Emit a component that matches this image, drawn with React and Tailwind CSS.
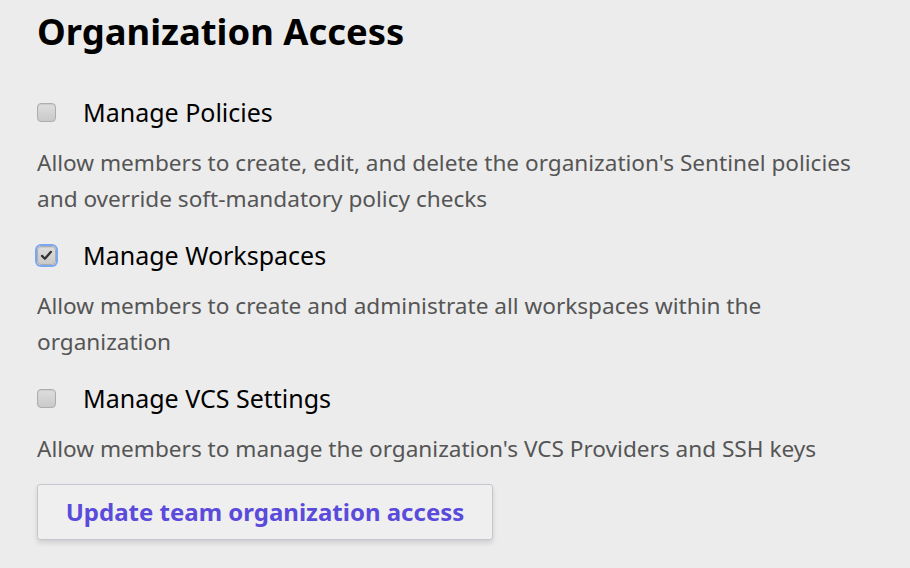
import React from "react";

const perms = [
  {
    label: "Manage Policies",
    desc: "Allow members to create, edit, and delete the organization's Sentinel policies and override soft-mandatory policy checks",
    checked: false,
  },
  {
    label: "Manage Workspaces",
    desc: "Allow members to create and administrate all workspaces within the organization",
    checked: true,
  },
  {
    label: "Manage VCS Settings",
    desc: "Allow members to manage the organization's VCS Providers and SSH keys",
    checked: false,
  },
];

function Box({ checked }) {
  return (
    <span
      className={`relative flex h-[19px] w-[19px] shrink-0 items-center justify-center rounded-[4px] ${
        checked ? "ring-2 ring-[#7aa7f0]" : ""
      }`}
    >
      <span className="absolute inset-0 rounded-[4px] border border-[#adadad] bg-gradient-to-b from-[#dedede] to-[#c9c9c9] shadow-[inset_0_1px_1px_rgba(0,0,0,0.08)]" />
      {checked && (
        <svg viewBox="0 0 16 16" className="relative h-[13px] w-[13px]">
          <path d="M2.5 8.5 L6 12 L13.5 3.5" fill="none" stroke="#333" strokeWidth="2.8" strokeLinecap="round" strokeLinejoin="round" />
        </svg>
      )}
    </span>
  );
}

export default function App() {
  return (
    <div className="min-h-screen bg-[#ececec] px-[37px] pt-[8px] text-[#111]" style={{ fontFamily: "'Noto Sans', 'Open Sans', sans-serif" }}>
      <h1 className="text-[36.4px] font-bold leading-[46px] text-black">Organization Access</h1>

      <div className="mt-[40px] flex flex-col">
        {perms.map((p) => (
          <div key={p.label} className="mb-[20px] last:mb-0">
            <label className="flex h-[36px] items-center gap-[27px]">
              <Box checked={p.checked} />
              <span className="text-[25px] leading-none text-black">{p.label}</span>
            </label>
            <p className="mt-[15px] max-w-[840px] text-[22.6px] leading-[36px] text-[#555]">{p.desc}</p>
          </div>
        ))}
      </div>

      <button className="mt-[17px] h-[56px] w-[456px] rounded-[3px] border border-[#c3c6cd] bg-[#efefef] text-[24px] font-bold text-[#5a4bdb] shadow-[0_3px_5px_rgba(0,0,0,0.12)]">
        Update team organization access
      </button>
    </div>
  );
}
